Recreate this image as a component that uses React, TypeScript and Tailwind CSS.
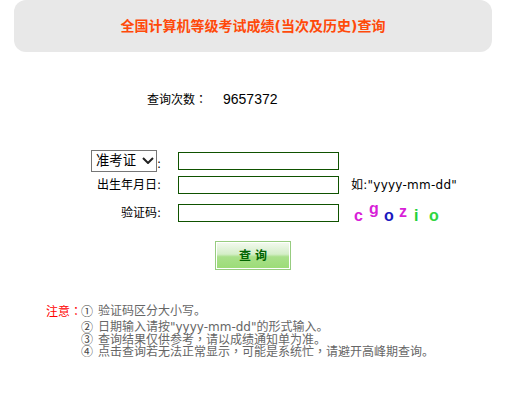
const cjk = "font-['DejaVu_Sans','Noto_Sans_CJK_SC',sans-serif]";
// traditional-style punctuation sits centred in the box, as in the reference
const mid = "font-['Noto_Sans_CJK_TC',sans-serif]";
const num = "w-[17px] shrink-0 font-['Noto_Sans_CJK_SC',sans-serif] text-[#444444]";

const captcha = [
  { ch: "c", className: "text-[#d81fd8] mt-[6px]" },
  { ch: "g", className: "text-[#d81fd8] mt-[-1px]" },
  { ch: "o", className: "text-[#1a1ac0] mt-[6px]" },
  { ch: "z", className: "text-[#d81fd8] mt-[2px]" },
  { ch: "i", className: "text-[#22d03a] mt-[6px]" },
  { ch: "o", className: "text-[#2fd640] mt-[6px]" },
];

function TextInput() {
  return <input type="text" className="block h-[18px] w-[161px] border border-[#0f5200] bg-white" />;
}

export default function App() {
  return (
    <div className={`h-[411px] w-[520px] overflow-hidden bg-white text-black ${cjk}`}>
      {/* Title */}
      <div className="ml-[14px] flex h-[52px] w-[478px] items-center justify-center rounded-[12px] bg-[#e8e8e8]">
        <h1 className="text-[14px] font-bold text-[#ff4a0a]">全国计算机等级考试成绩(当次及历史)查询</h1>
      </div>

      {/* Counter */}
      <div className="mt-[38px] ml-[147px] flex h-[18px] items-center">
        <span className="w-[76px] text-[12px]">
          查询次数<span className={mid}>：</span>
        </span>
        <span className="font-['Liberation_Sans',sans-serif] text-[14px]">9657372</span>
      </div>

      {/* Form */}
      <div className="mt-[42px] ml-[91px] grid grid-cols-[70px_1fr] items-center">
        <div className="flex h-[22px] items-end">
          <div className="relative">
            <select
              className="block h-[22px] w-[66px] appearance-none border border-[#767676] bg-white pl-[4px] text-[13.33px]"
              defaultValue="zkz"
            >
              <option value="zkz">准考证</option>
            </select>
            <svg
              className="pointer-events-none absolute top-[7px] left-[51px] h-[7px] w-[12px]"
              viewBox="0 0 12 7"
              fill="none"
              stroke="#222222"
              strokeWidth="2"
            >
              <path d="M1 1l5 5 5-5" />
            </svg>
          </div>
          <span className="text-[12px] leading-[16px]">:</span>
        </div>
        <div className="ml-[17px]">
          <TextInput />
        </div>

        <div className="mt-[4px] text-right text-[12px]">出生年月日:</div>
        <div className="mt-[4px] ml-[17px] flex items-center">
          <TextInput />
          <span className="ml-[12px] text-[12px] tracking-[0.25px]">如:"yyyy-mm-dd"</span>
        </div>

        <div className="mt-[8px] text-right text-[12px]">验证码:</div>
        <div className="mt-[8px] ml-[17px] flex items-center">
          <TextInput />
          <div className="ml-[15px] flex h-[22px] items-start font-['Liberation_Sans',sans-serif] text-[16px] font-bold leading-[16px]">
            {captcha.map((c, i) => (
              <span key={i} className={`w-[15px] ${c.className}`}>
                {c.ch}
              </span>
            ))}
          </div>
        </div>
      </div>

      {/* Submit */}
      <div className="mt-[17px] ml-[215px]">
        <button
          type="button"
          className="h-[29px] w-[76px] cursor-pointer border border-[#97cc80] bg-[linear-gradient(#f4faf0_0%,#d4eec8_45%,#a9e08a_55%,#9bdc76_100%)] text-[12px] font-bold text-[#006400] shadow-[inset_0_0_0_1px_#ffffff]"
        >
          查 询
        </button>
      </div>

      {/* Notes */}
      <div className="mt-[35px] ml-[46px] flex text-[12px] leading-[12px] text-[#666666]">
        <span className="w-[35px] shrink-0 whitespace-nowrap text-[#ff0000]">
          注意<span className={mid}>：</span>
        </span>
        <ul className="whitespace-nowrap">
          <li className="flex h-[12px]">
            <span className={num}>①</span>
            <span>验证码区分大小写。</span>
          </li>
          <li className="mt-[4px] flex h-[12px]">
            <span className={num}>②</span>
            <span>日期输入请按"yyyy-mm-dd"的形式输入。</span>
          </li>
          <li className="flex h-[12px]">
            <span className={num}>③</span>
            <span>
              查询结果仅供参考<span className={mid}>，</span>请以成绩通知单为准。
            </span>
          </li>
          <li className="flex h-[12px]">
            <span className={num}>④</span>
            <span>
              点击查询若无法正常显示<span className={mid}>，</span>可能是系统忙<span className={mid}>，</span>请避开高峰期查询。
            </span>
          </li>
        </ul>
      </div>
    </div>
  );
}
